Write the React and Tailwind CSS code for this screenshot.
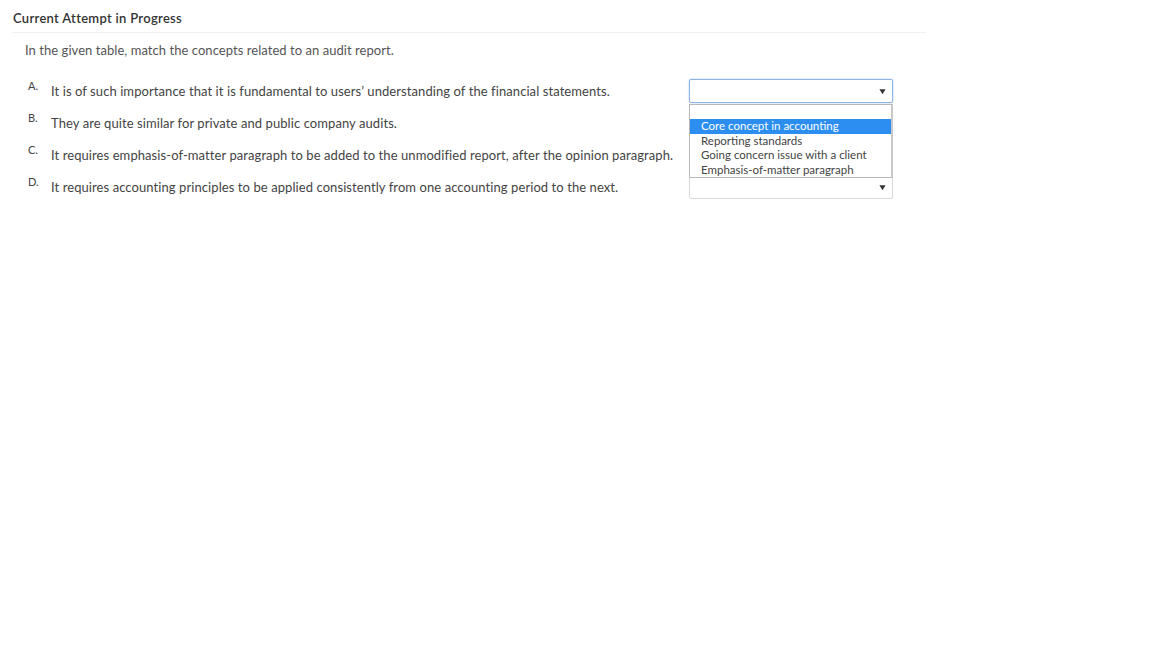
const rows = [
  { letter: 'A.', text: 'It is of such importance that it is fundamental to users\u2019 understanding of the financial statements.' },
  { letter: 'B.', text: 'They are quite similar for private and public company audits.' },
  { letter: 'C.', text: 'It requires emphasis-of-matter paragraph to be added to the unmodified report, after the opinion paragraph.' },
  { letter: 'D.', text: 'It requires accounting principles to be applied consistently from one accounting period to the next.' },
];

const options = [
  'Core concept in accounting',
  'Reporting standards',
  'Going concern issue with a client',
  'Emphasis-of-matter paragraph',
];

const Caret = () => (
  <svg viewBox="0 0 8 8" className="h-[7px] w-[7px] text-[#333]">
    <path d="M0.5 1.5h7L4 7z" fill="currentColor" />
  </svg>
);

function Select({ focused }) {
  return (
    <div
      className={
        'h-6 w-[204px] rounded-[2px] bg-white flex items-center justify-end pr-[6px] border ' +
        (focused ? 'border-[#8fb4e6] shadow-[0_0_2px_rgba(80,140,220,0.5)]' : 'border-[#d9d9d9]')
      }
    >
      <Caret />
    </div>
  );
}

export default function App() {
  return (
    <div className="min-h-[648px] w-[1152px] bg-white text-[#333]" style={{ fontFamily: 'Lato, "Open Sans", sans-serif' }}>
      <div className="w-[914px] ml-3 pt-[10px]">
        <div className="pl-[1px] h-[16px] text-[13px] font-semibold leading-[16px] tracking-[0.3px] text-[#333]">Current Attempt in Progress</div>
        <div className="mt-[6px] h-px bg-[#f0f0f0]" />
      </div>
      <div className="pl-[25px] pt-[9px] text-[13px] leading-[16px] tracking-[0.05px] text-[#555]">
        In the given table, match the concepts related to an audit report.
      </div>

      <div className="relative mt-[21px] w-[893px]">
        {rows.map((r, i) => (
          <div key={r.letter} className="flex h-8 items-start">
            <div className="w-[51px] pl-[28px] pt-[1px] text-[11px] leading-[12px] text-[#444]">{r.letter}</div>
            <div className="flex-1 pt-[4px] text-[13px] leading-[16px] tracking-[0.08px] text-[#444]">{r.text}</div>
            <Select focused={i === 0} />
          </div>
        ))}

        {/* open dropdown list of the first select */}
        <div className="absolute left-[689px] top-[25px] w-[204px] border border-[#b8b8b8] border-r-[2px] border-r-[#c8c8c8] bg-white text-[11.5px] leading-[14.5px] text-[#444]">
          <div className="h-[14px]" />
          {options.map((o, i) => (
            <div key={o} className={'pl-[11px] ' + (i === 0 ? 'bg-[#2b8ef0] text-white' : '')}>
              {o}
            </div>
          ))}
        </div>
      </div>
    </div>
  );
}
